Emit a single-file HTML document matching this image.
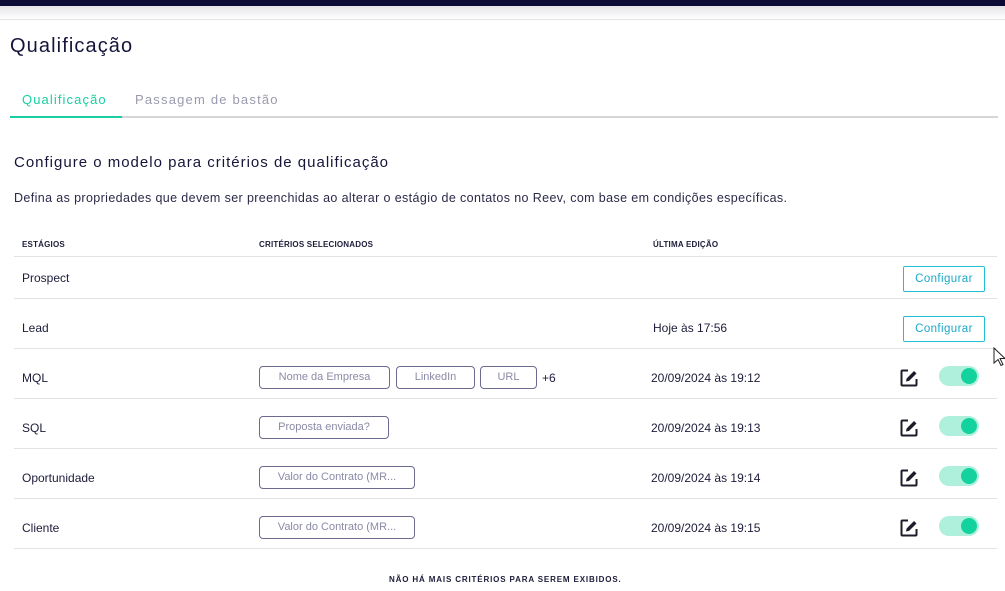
<!DOCTYPE html>
<html><head><meta charset="utf-8"><style>
*{margin:0;padding:0;box-sizing:border-box}
body{width:1005px;height:591px;overflow:hidden;background:#fff;font-family:"Liberation Sans",sans-serif;color:#1c1c3a;position:relative}
.top{position:absolute;left:0;top:0;width:1005px;height:6px;background:#0b0a35}
.sh{position:absolute;left:0;top:6px;width:1005px;height:13px;background:linear-gradient(#e4e4e8,#fff)}
.l19{position:absolute;left:0;top:19px;width:1005px;height:1px;background:#e4e4e4}
.a{position:absolute;white-space:nowrap}
.tabline{position:absolute;left:10px;top:116px;width:988px;height:2px;background:#d6d6d8}
.tabact{position:absolute;left:10px;top:116px;width:112px;height:2px;background:#19cfa3}
.hr{position:absolute;left:14px;width:983px;height:1px;background:#e2e2e4}
.th{font-size:8px;font-weight:bold;color:#1c1c3a;top:240px;letter-spacing:.2px}
.td{font-size:12px;color:#1c1c3a}
.chip{position:absolute;height:23px;border:1px solid #6b6b90;border-radius:4px;font-size:11px;color:#8a8aa6;text-align:center;line-height:21px}
.btn{position:absolute;left:903px;width:82px;height:26px;border:1px solid #1fc0d6;border-radius:2px;color:#1aa9c8;font-size:11.5px;text-align:center;line-height:24px;letter-spacing:.4px}
.tg{position:absolute;left:939px;width:40px;height:20px;border-radius:10px;background:#aef0dc}
.tg:after{content:"";position:absolute;right:2px;top:2px;width:16px;height:16px;border-radius:50%;background:#14d29e}
.ed{position:absolute;left:899px;width:20px;height:20px}
</style></head><body>
<div class="top"></div><div class="sh"></div><div class="l19"></div>
<div class="a" style="left:10px;top:35px;font-size:20px;color:#15153a;letter-spacing:1.1px">Qualificação</div>
<div class="a" style="left:22px;top:92px;font-size:13px;color:#19cfa3;letter-spacing:1.1px">Qualificação</div>
<div class="a" style="left:135px;top:92px;font-size:13px;color:#9a9aae;letter-spacing:1.2px">Passagem de bastão</div>
<div class="tabline"></div><div class="tabact"></div>
<div class="a" style="left:14px;top:154px;font-size:15px;color:#15153a;letter-spacing:1px">Configure o modelo para critérios de qualificação</div>
<div class="a" style="left:14px;top:191px;font-size:12.5px;color:#2a2a48;letter-spacing:.38px">Defina as propriedades que devem ser preenchidas ao alterar o estágio de contatos no Reev, com base em condições específicas.</div>
<div class="a th" style="left:22px">ESTÁGIOS</div>
<div class="a th" style="left:259px">CRITÉRIOS SELECIONADOS</div>
<div class="a th" style="left:653px">ÚLTIMA EDIÇÃO</div>
<div class="hr" style="top:256px"></div><div class="hr" style="top:298px"></div><div class="hr" style="top:348px"></div><div class="hr" style="top:398px"></div><div class="hr" style="top:448px"></div><div class="hr" style="top:498px"></div><div class="hr" style="top:548px"></div>
<div class="a td" style="left:22px;top:271px">Prospect</div>
<div class="btn" style="top:266px">Configurar</div>
<div class="a td" style="left:22px;top:321px">Lead</div>
<div class="a td" style="left:653px;top:321px">Hoje às 17:56</div>
<div class="btn" style="top:316px">Configurar</div>
<div class="a td" style="left:22px;top:371px">MQL</div>
<div class="chip" style="left:259px;top:366px;width:131px">Nome da Empresa</div>
<div class="chip" style="left:396px;top:366px;width:79px">LinkedIn</div>
<div class="chip" style="left:480px;top:366px;width:57px">URL</div>
<div class="a td" style="left:542px;top:371px">+6</div>
<div class="a td" style="left:651px;top:371px">20/09/2024 às 19:12</div>
<div class="a td" style="left:22px;top:421px">SQL</div>
<div class="chip" style="left:259px;top:416px;width:130px">Proposta enviada?</div>
<div class="a td" style="left:651px;top:421px">20/09/2024 às 19:13</div>
<div class="a td" style="left:22px;top:471px">Oportunidade</div>
<div class="chip" style="left:259px;top:466px;width:156px">Valor do Contrato (MR...</div>
<div class="a td" style="left:651px;top:471px">20/09/2024 às 19:14</div>
<div class="a td" style="left:22px;top:521px">Cliente</div>
<div class="chip" style="left:259px;top:516px;width:156px">Valor do Contrato (MR...</div>
<div class="a td" style="left:651px;top:521px">20/09/2024 às 19:15</div>
<svg class="ed" style="top:368px" viewBox="0 0 20 20"><path d="M9 2.5H3.5a1 1 0 0 0-1 1v13a1 1 0 0 0 1 1h13a1 1 0 0 0 1-1V11" fill="none" stroke="#1c1c2a" stroke-width="2"/><path d="M7 13.5l.6-3L15 3l2.5 2.5-7.4 7.4z" fill="#1c1c2a"/></svg>
<svg class="ed" style="top:418px" viewBox="0 0 20 20"><path d="M9 2.5H3.5a1 1 0 0 0-1 1v13a1 1 0 0 0 1 1h13a1 1 0 0 0 1-1V11" fill="none" stroke="#1c1c2a" stroke-width="2"/><path d="M7 13.5l.6-3L15 3l2.5 2.5-7.4 7.4z" fill="#1c1c2a"/></svg>
<svg class="ed" style="top:468px" viewBox="0 0 20 20"><path d="M9 2.5H3.5a1 1 0 0 0-1 1v13a1 1 0 0 0 1 1h13a1 1 0 0 0 1-1V11" fill="none" stroke="#1c1c2a" stroke-width="2"/><path d="M7 13.5l.6-3L15 3l2.5 2.5-7.4 7.4z" fill="#1c1c2a"/></svg>
<svg class="ed" style="top:518px" viewBox="0 0 20 20"><path d="M9 2.5H3.5a1 1 0 0 0-1 1v13a1 1 0 0 0 1 1h13a1 1 0 0 0 1-1V11" fill="none" stroke="#1c1c2a" stroke-width="2"/><path d="M7 13.5l.6-3L15 3l2.5 2.5-7.4 7.4z" fill="#1c1c2a"/></svg>
<div class="tg" style="top:366px"></div><div class="tg" style="top:416px"></div><div class="tg" style="top:466px"></div><div class="tg" style="top:516px"></div>
<svg class="a" style="left:993px;top:347px" width="13" height="20" viewBox="0 0 13 20"><path d="M1 1v15l4-3.5 3 6 2-1-3-6h5z" fill="#fff" stroke="#222" stroke-width="1"/></svg>
<div class="a" style="left:389px;top:575px;font-size:8px;font-weight:bold;color:#1c1c3a;letter-spacing:.85px">NÃO HÁ MAIS CRITÉRIOS PARA SEREM EXIBIDOS.</div>
</body></html>
